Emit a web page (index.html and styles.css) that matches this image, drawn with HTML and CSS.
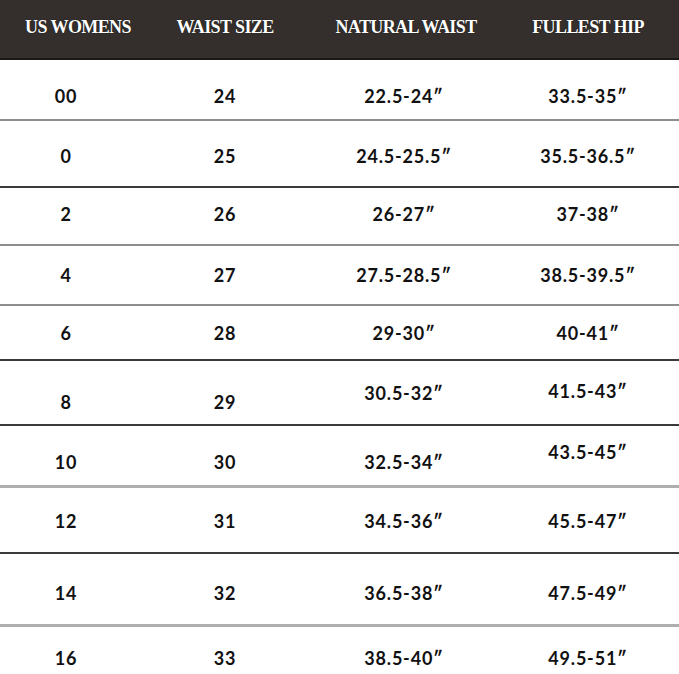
FILE: index.html
```html
<!DOCTYPE html>
<html>
<head>
<meta charset="utf-8">
<link rel="stylesheet" href="styles.css">
</head>
<body>
<div class="chart">
  <div class="row head">
    <div class="cell c1">US WOMENS</div>
    <div class="cell c2">WAIST SIZE</div>
    <div class="cell c3">NATURAL WAIST</div>
    <div class="cell c4">FULLEST HIP</div>
  </div>
  <div class="row r1 gray">
    <div class="cell c1 dn12">00</div>
    <div class="cell c2 dn12">24</div>
    <div class="cell c3 dn12">22.5-24″</div>
    <div class="cell c4 dn12">33.5-35″</div>
  </div>
  <div class="row r2 dark">
    <div class="cell c1 dn4">0</div>
    <div class="cell c2 dn4">25</div>
    <div class="cell c3 dn4">24.5-25.5″</div>
    <div class="cell c4 dn4">35.5-36.5″</div>
  </div>
  <div class="row r3 gray">
    <div class="cell c1 up4">2</div>
    <div class="cell c2 up4">26</div>
    <div class="cell c3 up4">26-27″</div>
    <div class="cell c4 up4">37-38″</div>
  </div>
  <div class="row r4 gray">
    <div class="cell c1">4</div>
    <div class="cell c2">27</div>
    <div class="cell c3">27.5-28.5″</div>
    <div class="cell c4">38.5-39.5″</div>
  </div>
  <div class="row r5 dark">
    <div class="cell c1">6</div>
    <div class="cell c2">28</div>
    <div class="cell c3">29-30″</div>
    <div class="cell c4">40-41″</div>
  </div>
  <div class="row r6 dark">
    <div class="cell c1 dn18">8</div>
    <div class="cell c2 dn18">29</div>
    <div class="cell c3">30.5-32″</div>
    <div class="cell c4 up4">41.5-43″</div>
  </div>
  <div class="row r7 light">
    <div class="cell c1 dn12">10</div>
    <div class="cell c2 dn12">30</div>
    <div class="cell c3 dn12">32.5-34″</div>
    <div class="cell c4 up8">43.5-45″</div>
  </div>
  <div class="row r8 dark">
    <div class="cell c1 dn2">12</div>
    <div class="cell c2 dn2">31</div>
    <div class="cell c3 dn2">34.5-36″</div>
    <div class="cell c4 dn2">45.5-47″</div>
  </div>
  <div class="row r9 light">
    <div class="cell c1 dn8">14</div>
    <div class="cell c2 dn8">32</div>
    <div class="cell c3 dn8">36.5-38″</div>
    <div class="cell c4 dn8">47.5-49″</div>
  </div>
  <div class="row r10">
    <div class="cell c1 dn14">16</div>
    <div class="cell c2 dn14">33</div>
    <div class="cell c3 dn14">38.5-40″</div>
    <div class="cell c4 dn14">49.5-51″</div>
  </div>
</div>
</body>
</html>
```
FILE: styles.css
```css
html, body {
  margin: 0;
  padding: 0;
  background: #ffffff;
}
.chart {
  width: 679px;
  height: 674px;
  overflow: hidden;
  display: flex;
  flex-direction: column;
}
.row {
  display: grid;
  grid-template-columns: 132px 186px 172px 1fr;
  box-sizing: border-box;
  flex: none;
  font-family: Lato, "DejaVu Sans", sans-serif;
  font-weight: 700;
  font-size: 18px;
  color: #111;
  letter-spacing: 0.8px;
}
.cell {
  display: flex;
  align-items: center;
  justify-content: center;
  box-sizing: border-box;
}
.c4 { padding-left: 7px; }
.head {
  height: 60px;
  background: #342f2d;
  border-bottom: 2px solid #1a1716;
  font-family: "Liberation Serif", "DejaVu Serif", serif;
  font-weight: 700;
  font-size: 18px;
  letter-spacing: -0.6px;
  color: #ffffff;
  text-shadow: 0 0 1px #000;
}
.head .cell { padding-bottom: 4px; }
.head .c1 { padding-left: 24px; }
.head .c3 { padding-left: 4px; }
.gray { border-bottom: 2px solid #8e8e8e; }
.light { border-bottom: 3px solid #aeaeae; }
.dark { border-bottom: 2px solid #3a3a3a; }
.r1 { height: 61px; }
.r2 { height: 67px; }
.r3 { height: 58px; }
.r4 { height: 60px; }
.r5 { height: 55px; }
.r6 { height: 65px; }
.r7 { height: 62px; }
.r8 { height: 66px; }
.r9 { height: 73px; }
.r10 { height: 47px; }
.dn2 { padding-top: 2px; }
.dn4 { padding-top: 4px; }
.dn8 { padding-top: 8px; }
.dn12 { padding-top: 12px; }
.dn14 { padding-top: 14px; }
.dn18 { padding-top: 18px; }
.up4 { padding-bottom: 4px; }
.up8 { padding-bottom: 8px; }
```
